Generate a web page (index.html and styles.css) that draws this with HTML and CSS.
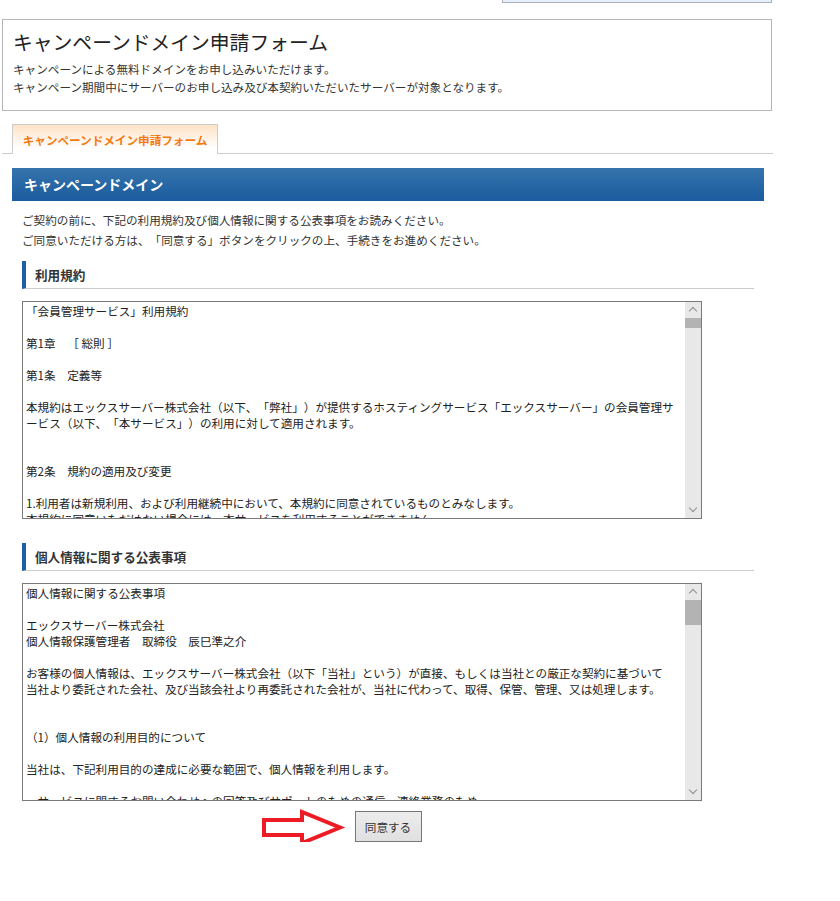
FILE: index.html
```html
<!DOCTYPE html>
<html lang="ja">
<head>
    <meta charset="UTF-8">
    <title>キャンペーンドメイン申請フォーム</title>
    <link rel="stylesheet" href="styles.css">
</head>
<body>
<div class="page">
    <div class="topbox"></div>

    <div class="intro">
        <h1 class="intro-title">キャンペーンドメイン申請フォーム</h1>
        <p class="intro-text">キャンペーンによる無料ドメインをお申し込みいただけます。<br>キャンペーン期間中にサーバーのお申し込み及び本契約いただいたサーバーが対象となります。</p>
    </div>

    <div class="tabs">
        <div class="tab">キャンペーンドメイン申請フォーム</div>
    </div>

    <h2 class="bar">キャンペーンドメイン</h2>

    <div class="content">
        <p class="lead">ご契約の前に、下記の利用規約及び個人情報に関する公表事項をお読みください。<br>ご同意いただける方は、「同意する」ボタンをクリックの上、手続きをお進めください。</p>

        <h3 class="sub">利用規約</h3>
        <div class="textbox">
            <div class="textbox-body">「会員管理サービス」利用規約<br>
<br>
第1章　［ 総則 ］<br>
<br>
第1条　定義等<br>
<br>
本規約はエックスサーバー株式会社（以下、「弊社」）が提供するホスティングサービス「エックスサーバー」の会員管理サ<br>
ービス（以下、「本サービス」）の利用に対して適用されます。<br>
<br>
<br>
第2条　規約の適用及び変更<br>
<br>
1.利用者は新規利用、および利用継続中において、本規約に同意されているものとみなします。<br>
本規約に同意いただけない場合には、本サービスを利用することができません。</div>
            <div class="scrollbar">
                <span class="arrow up"></span>
                <span class="thumb thumb-small"></span>
                <span class="track"></span>
                <span class="arrow down"></span>
            </div>
        </div>

        <h3 class="sub sub-second">個人情報に関する公表事項</h3>
        <div class="textbox">
            <div class="textbox-body">個人情報に関する公表事項<br>
<br>
エックスサーバー株式会社<br>
個人情報保護管理者　取締役　辰巳準之介<br>
<br>
お客様の個人情報は、エックスサーバー株式会社（以下「当社」という）が直接、もしくは当社との厳正な契約に基づいて<br>
当社より委託された会社、及び当該会社より再委託された会社が、当社に代わって、取得、保管、管理、又は処理します。<br>
<br>
<br>
（1）個人情報の利用目的について<br>
<br>
当社は、下記利用目的の達成に必要な範囲で、個人情報を利用します。<br>
<br>
・サービスに関するお問い合わせへの回答及びサポートのための通信、連絡業務のため</div>
            <div class="scrollbar">
                <span class="arrow up"></span>
                <span class="thumb thumb-large"></span>
                <span class="track"></span>
                <span class="arrow down"></span>
            </div>
        </div>

        <div class="actions">
            <div class="agree-wrap">
                <svg class="pointer" width="90" height="40" viewBox="0 0 90 40">
                    <polygon points="5,12 43,12 43,4 81,19.5 43,35 43,27 5,27" fill="#fff" stroke="#ed1c24" stroke-width="4" stroke-linejoin="miter"/>
                </svg>
                <button class="agree" type="button">同意する</button>
            </div>
        </div>
    </div>
</div>
</body>
</html>
```

FILE: styles.css
```css
body {
    margin: 0;
    padding: 0;
    background: #fff;
    color: #333;
    font-family: "Noto Sans CJK JP", "Liberation Sans", sans-serif;
    font-size: 11.6px;
    text-spacing-trim: space-all;
}

.page {
    width: 771px;
    margin-left: 2px;
}

/* 上部に見切れている枠 */
.topbox {
    margin-left: 500px;
    width: 268px;
    height: 2px;
    background: #e6eef7;
    border: 1px solid #aab3bd;
    border-top: none;
}

.intro {
    margin-top: 16px;
    height: 90px;
    border: 1px solid #b5b5b5;
    padding: 0 0 0 10px;
    width: 758px;
}

.intro-title {
    margin: 8px 0 0;
    font-size: 19.8px;
    font-weight: normal;
    line-height: 28px;
    color: #222;
}

.intro-text {
    margin: 4px 0 0;
    line-height: 18px;
    color: #333;
}

.tabs {
    margin-top: 13px;
    padding-left: 10px;
    border-bottom: 1px solid #cccccc;
    height: 29px;
    display: flex;
}

.tab {
    width: 206px;
    height: 30px;
    box-sizing: border-box;
    border: 1px solid #cccccc;
    border-bottom: none;
    background: linear-gradient(#ffe2c6, #fff 80%);
    color: #f37b12;
    font-weight: bold;
    text-align: center;
    line-height: 30px;
    margin-bottom: -1px;
}

.bar {
    margin: 14px 0 0 10px;
    width: 752px;
    height: 33px;
    box-sizing: border-box;
    padding-left: 12px;
    background: linear-gradient(#3574ab, #1b5b9f);
    color: #fff;
    font-size: 14px;
    font-weight: bold;
    line-height: 33px;
}

.content {
    margin-left: 20px;
    width: 732px;
}

.lead {
    margin: 9px 0 0;
    line-height: 20px;
}

.sub {
    margin: 11px 0 0;
    height: 28px;
    box-sizing: border-box;
    border-left: 4px solid #1e5ea6;
    border-bottom: 1px solid #cccccc;
    padding-left: 9px;
    font-size: 12.6px;
    font-weight: bold;
    line-height: 27px;
    color: #333;
}

.sub-second {
    margin-top: 24px;
}

.textbox {
    margin-top: 12px;
    width: 680px;
    height: 218px;
    box-sizing: border-box;
    border: 1px solid #7a7a7a;
    display: flex;
    overflow: hidden;
}

.textbox-body {
    flex: 1;
    padding: 1px 3px;
    line-height: 16px;
    color: #222;
    white-space: nowrap;
    overflow: hidden;
}

.scrollbar {
    width: 16px;
    background: #e8e8e8;
    display: flex;
    flex-direction: column;
    align-items: center;
}

.arrow {
    width: 16px;
    height: 16px;
    position: relative;
}

.arrow::before {
    content: "";
    position: absolute;
    left: 5px;
    width: 5px;
    height: 5px;
    border-left: 1px solid #8f8f8f;
    border-top: 1px solid #8f8f8f;
}

.arrow.up::before {
    top: 6px;
    transform: rotate(45deg);
}

.arrow.down::before {
    top: 3px;
    transform: rotate(-135deg);
}

.thumb {
    width: 16px;
    background: #b3b3b3;
}

.thumb-small {
    height: 10px;
}

.thumb-large {
    height: 25px;
}

.track {
    flex: 1;
}

.actions {
    margin-top: 10px;
    display: flex;
    justify-content: center;
}

.agree-wrap {
    position: relative;
}

.agree {
    width: 67px;
    height: 31px;
    border: 1px solid #767676;
    background: linear-gradient(#ececec, #e0e0e0);
    color: #333;
    font-family: "Noto Sans CJK JP", "Liberation Sans", sans-serif;
    font-size: 11.6px;
    padding: 0;
    margin: 0;
}

.pointer {
    position: absolute;
    right: 100%;
    top: -3px;
    margin-right: 6px;
}
```
